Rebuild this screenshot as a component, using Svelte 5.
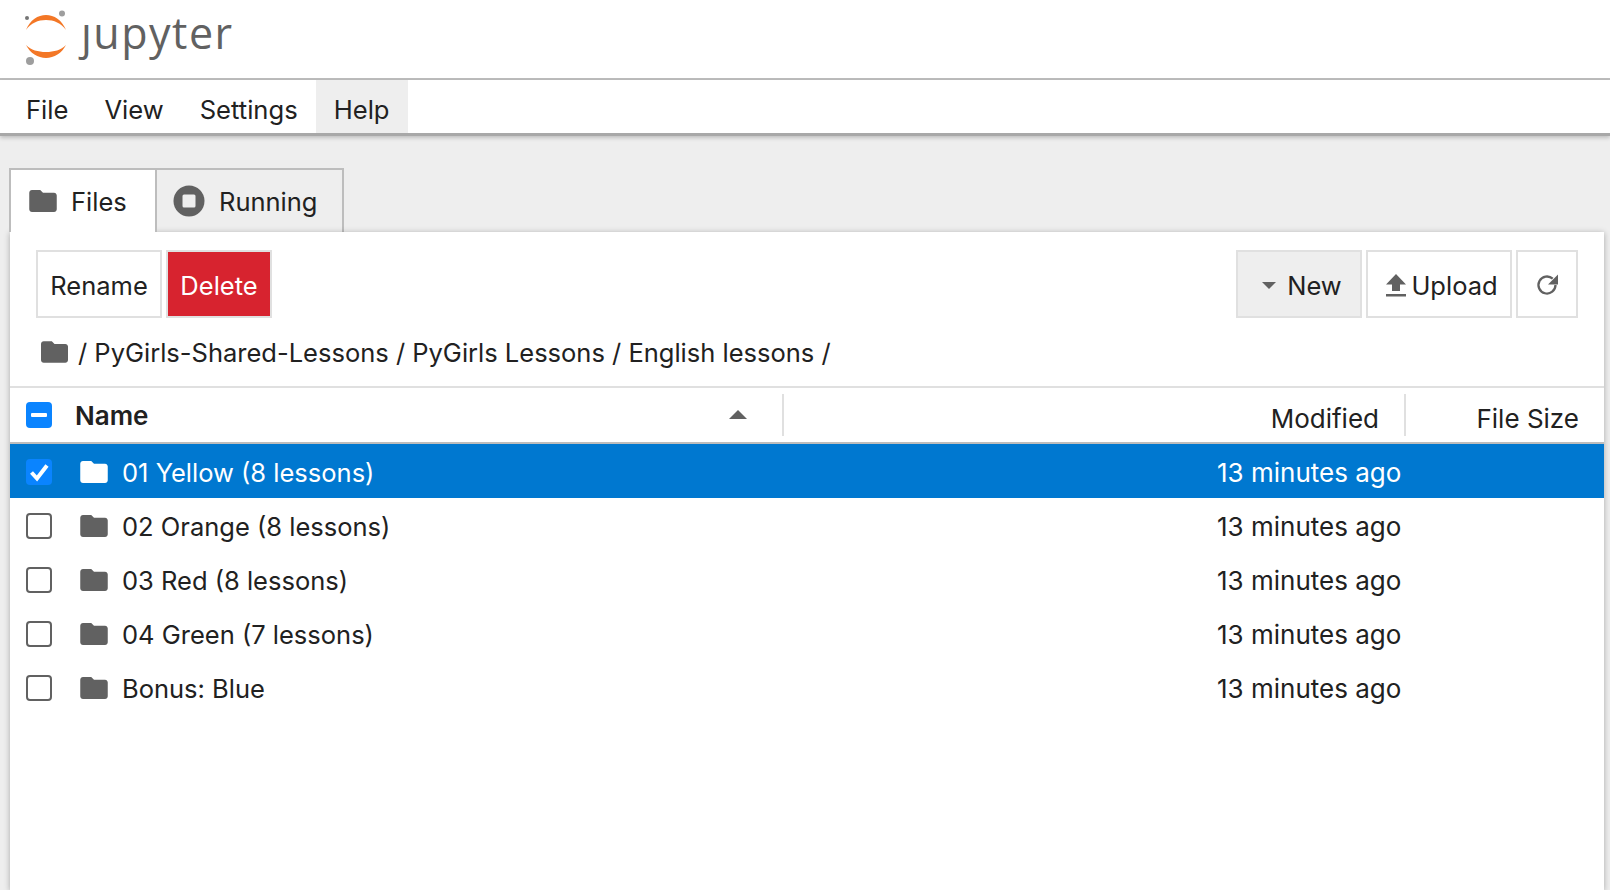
<script lang="ts">
  const folderPath = 'M10 4H4c-1.1 0-2 .9-2 2v12c0 1.1.9 2 2 2h16c1.1 0 2-.9 2-2V8c0-1.1-.9-2-2-2h-8l-2-2z';
  const menus = ['File', 'View', 'Settings', 'Help'];
  const rows = [
    { name: '01 Yellow (8 lessons)', selected: true },
    { name: '02 Orange (8 lessons)', selected: false },
    { name: '03 Red (8 lessons)', selected: false },
    { name: '04 Green (7 lessons)', selected: false },
    { name: 'Bonus: Blue', selected: false }
  ];
</script>

<div class="page">
  <header class="top">
    <svg class="logo" viewBox="0 0 44 56" width="44" height="56" aria-hidden="true">
      <path d="M2 20C6 10 14 5 22 5S38 10 42 20C37 13 30 10 22 10S7 13 2 20z" fill="#f37726" />
      <path d="M2 35C6 43 14 48 22 48S38 43 42 35C37 40 30 42 22 42S7 40 2 35z" fill="#f37726" />
      <circle cx="38" cy="3.500" r="3" fill="#9e9e9e" />
      <circle cx="3" cy="8" r="2" fill="#757575" />
      <circle cx="6" cy="51" r="4" fill="#9e9e9e" />
    </svg>
    <span class="wordmark">ȷupyter</span>
  </header>

  <nav class="menubar">
    {#each menus as m}
      <div class="menu" class:open={m === 'Help'}>{m}</div>
    {/each}
  </nav>

  <main class="body">
    <div class="tabs">
      <div class="tab current">
        <svg viewBox="2 4 20 16" width="28" height="22"><path d={folderPath} fill="#616161" /></svg>
        Files
      </div>
      <div class="tab">
        <svg viewBox="0 0 32 32" width="32" height="32">
          <circle cx="16" cy="16" r="15.500" fill="#616161" />
          <rect x="9.500" y="9.500" width="13" height="13" rx="1.500" fill="#eee" />
        </svg>
        Running
      </div>
    </div>

    <section class="panel">
      <div class="toolbar">
        <div class="group">
          <button>Rename</button>
          <button class="danger">Delete</button>
        </div>
        <div class="group">
          <button class="new"><span class="caret"></span>New</button>
          <button class="upload">
            <svg viewBox="0 0 20 23" width="20" height="23">
              <path d="M10 0l10 10.500h-6V17H6v-6.500H0z" fill="#616161" />
              <rect y="20" width="20" height="2.500" fill="#616161" />
            </svg>
            Upload
          </button>
          <button class="refresh" aria-label="Refresh">
            <svg viewBox="0 0 24 24" width="24" height="24">
              <path d="M20.500 12a8.500 8.500 0 1 1-2.800-6.300" fill="none" stroke="#616161" stroke-width="2.300" />
              <path d="M23 1.500v10h-10z" fill="#616161" />
            </svg>
          </button>
        </div>
      </div>

      <div class="crumbs">
        <svg viewBox="2 4 20 16" width="27" height="22"><path d={folderPath} fill="#616161" /></svg>
        <span>/ PyGirls-Shared-Lessons / PyGirls Lessons / English lessons /</span>
      </div>

      <div class="head">
        <span class="check mixed"><i></i></span>
        <span class="col-name">Name</span>
        <span class="sort"></span>
        <span class="col-mod">Modified</span>
        <span class="col-size">File Size</span>
      </div>

      <ul class="list">
        {#each rows as r}
          <li class="row" class:selected={r.selected}>
            <span class="check" class:on={r.selected}>
              {#if r.selected}
                <svg viewBox="0 0 26 26" width="26" height="26">
                  <path d="M5.500 13.500l5.500 6 10-13" fill="none" stroke="#fff" stroke-width="4" />
                </svg>
              {/if}
            </span>
            <svg class="ficon" viewBox="2 4 20 16" width="28" height="22">
              <path d={folderPath} fill={r.selected ? '#fff' : '#616161'} />
            </svg>
            <span class="fname">{r.name}</span>
            <span class="fmod">13 minutes ago</span>
          </li>
        {/each}
      </ul>
    </section>
  </main>
</div>

<style>
  :global(body) {
    margin: 0;
    background: #eee;
  }
  .page {
    height: 890px;
    overflow: hidden;
    display: flex;
    flex-direction: column;
    font-family: Inter, 'Noto Sans', sans-serif;
    font-size: 25.500px;
    color: #212121;
  }
  .top {
    flex: none;
    box-sizing: border-box;
    background: #fff;
    border-bottom: 2px solid #bdbdbd;
    height: 80px;
    display: flex;
    align-items: flex-start;
    padding: 10px 0 0 24px;
    gap: 13px;
  }
  .logo {
    flex: none;
  }
  .wordmark {
    font-family: 'Open Sans', sans-serif;
    font-size: 43px;
    line-height: 45px;
    color: #616161;
    letter-spacing: 1.500px;
  }
  .menubar {
    height: 53px;
    flex: none;
    background: #fff;
    display: flex;
    border-bottom: 3px solid #a8a8a8;
    box-shadow: 0 2px 4px rgba(0, 0, 0, 0.2);
    position: relative;
    font-size: 25.600px;
  }
  .menu {
    padding: 4px 18px 0;
    line-height: 52px;
    height: 53px;
    box-sizing: border-box;
  }
  .menu:first-child {
    padding-left: 26px;
  }
  .menu.open {
    background: #eee;
  }
  .body {
    flex: 1;
    padding: 32px 6px 0 10px;
    display: flex;
    flex-direction: column;
    min-height: 0;
  }
  .tabs {
    display: flex;
    height: 64px;
    flex: none;
    margin-left: -1px;
  }
  .tab {
    box-sizing: border-box;
    border: 2px solid #bdbdbd;
    border-bottom: 0;
    background: #eee;
    display: flex;
    align-items: center;
    gap: 14px;
    padding-left: 16px;
    width: 189px;
    margin-left: -2px;
  }
  .tab:first-child {
    margin-left: 0;
  }
  .tab.current {
    background: #fff;
    width: 148px;
    padding-left: 18px;
    position: relative;
    z-index: 2;
  }
  .panel {
    flex: 1;
    background: #fff;
    box-shadow: 0 1px 6px rgba(0, 0, 0, 0.3);
    display: flex;
    flex-direction: column;
    position: relative;
    min-height: 0;
  }
  .toolbar {
    display: flex;
    justify-content: space-between;
    padding: 18px 26px 0;
  }
  .group {
    display: flex;
    gap: 4px;
  }
  button {
    height: 68px;
    box-sizing: border-box;
    border: 2px solid #e0e0e0;
    background: #fff;
    font: inherit;
    color: #212121;
    padding: 2px 0 0;
    display: flex;
    align-items: center;
    justify-content: center;
    width: 126px;
  }
  .danger {
    width: 106px;
    background: #d7232f;
    color: #fff;
  }
  .new {
    background: #eee;
    gap: 11px;
    padding-left: 6px;
  }
  .caret {
    width: 0;
    height: 0;
    border: 7px solid transparent;
    border-top: 7px solid #616161;
    border-bottom: 0;
  }
  .upload {
    width: 146px;
    gap: 5px;
    padding-left: 6px;
  }
  .refresh {
    width: 62px;
  }
  .crumbs {
    height: 68px;
    display: flex;
    align-items: center;
    gap: 10px;
    padding-left: 31px;
  }
  .head {
    height: 58px;
    box-sizing: border-box;
    border-top: 2px solid #e0e0e0;
    border-bottom: 2px solid #bdbdbd;
    display: flex;
    align-items: center;
    padding-left: 16px;
    position: relative;
    font-size: 26px;
  }
  .col-name {
    font-weight: 600;
    margin-left: 23px;
    width: 654px;
  }
  .sort {
    width: 0;
    height: 0;
    border: 9px solid transparent;
    border-bottom: 9px solid #616161;
    border-top: 0;
    margin-right: 35px;
    margin-bottom: 2px;
  }
  .col-mod {
    flex: 1;
    height: 42px;
    line-height: 49px;
    text-align: right;
    box-sizing: border-box;
    padding-right: 25px;
    border-left: 2px solid #e0e0e0;
    border-right: 2px solid #e0e0e0;
  }
  .col-size {
    width: 198px;
    height: 42px;
    line-height: 49px;
    text-align: right;
    box-sizing: border-box;
    padding-right: 25px;
  }
  .list {
    list-style: none;
    margin: 0;
    padding: 0;
  }
  .row {
    height: 54px;
    box-sizing: border-box;
    padding-top: 2px;
    display: flex;
    align-items: center;
    padding-left: 16px;
  }
  .row.selected {
    background: #0078d0;
    color: #fff;
  }
  .check {
    width: 26px;
    height: 26px;
    box-sizing: border-box;
    border: 2px solid #616161;
    border-radius: 4px;
    flex: none;
    display: block;
  }
  .check.on,
  .check.mixed {
    border: 0;
    background: #0a84ff;
  }
  .check.mixed {
    display: flex;
    align-items: center;
    justify-content: center;
  }
  .check.mixed i {
    width: 16px;
    height: 4px;
    background: #fff;
    border-radius: 1px;
  }
  .check svg {
    display: block;
  }
  .ficon {
    margin-left: 28px;
    flex: none;
  }
  .fname {
    margin-left: 14px;
    width: 1095px;
    flex: none;
  }
  .fmod {
    white-space: nowrap;
    font-size: 26px;
  }
</style>
